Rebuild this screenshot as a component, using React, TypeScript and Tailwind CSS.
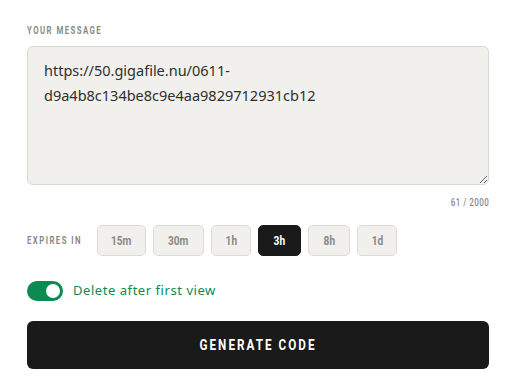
import { useState } from 'react';

const cond = "font-['Roboto',sans-serif] font-bold";

const options = [
    { v: '15m', w: 'w-[49px]' },
    { v: '30m', w: 'w-[51px]' },
    { v: '1h', w: 'w-[40px]' },
    { v: '3h', w: 'w-[43px]' },
    { v: '8h', w: 'w-[42px]' },
    { v: '1d', w: 'w-[40px]' },
];

export default function App() {
    const [expiry, setExpiry] = useState('3h');
    const [burn, setBurn] = useState(true);
    const msg = 'https://50.gigafile.nu/0611-d9a4b8c134be8c9e4aa9829712931cb12';

    return (
        <div className="min-h-screen bg-white px-[27px] pt-[25px] font-['Noto_Sans',sans-serif]">
            <label className={`${cond} block text-[10px] leading-[12px] tracking-[1.85px] text-[#8a8a86] mb-[9px] whitespace-nowrap`}>
                <span className="inline-block scale-x-[0.78] origin-left">YOUR MESSAGE</span>
            </label>
            <textarea
                defaultValue={msg}
                className="block w-full h-[139px] rounded-[6px] border border-[#d8d7d2] bg-[#f1f0ec] px-[16px] py-[11px] text-[14.5px] leading-[25px] text-[#2f2f2f] outline-none"
            />
            <div className={`${cond} font-medium text-right text-[10px] text-[#8a8a86] mt-[10px] tracking-[0.6px]`}>
                <span className="inline-block scale-x-[0.8] origin-right">61 / 2000</span>
            </div>

            <div className="flex items-center mt-[15px]">
                <span className={`${cond} text-[10px] tracking-[1.85px] text-[#8a8a86] w-[70px] whitespace-nowrap`}>
                    <span className="inline-block scale-x-[0.78] origin-left">EXPIRES IN</span>
                </span>
                <div className="flex gap-[7px]">
                    {options.map((o) => (
                        <button
                            key={o.v}
                            onClick={() => setExpiry(o.v)}
                            className={`${cond} ${o.w} h-[31px] rounded-[5px] border text-[13px] ${
                                expiry === o.v
                                    ? 'bg-[#1a1a1a] border-[#1a1a1a] text-white'
                                    : 'bg-[#f1f0ec] border-[#dcdbd6] text-[#8a8a86]'
                            }`}
                        >
                            <span className="inline-block scale-x-[0.78]">{o.v}</span>
                        </button>
                    ))}
                </div>
            </div>

            <div className="flex items-center gap-[10px] mt-[25px]">
                <button
                    onClick={() => setBurn(!burn)}
                    className={`relative w-[36px] h-[20px] rounded-full ${burn ? 'bg-[#0b8a52]' : 'bg-gray-300'}`}
                >
                    <span className={`absolute top-[3px] w-[14px] h-[14px] rounded-full bg-white ${burn ? 'left-[19px]' : 'left-[3px]'}`} />
                </button>
                <span className="text-[13px] tracking-[0.55px] text-[#0b8a52]">Delete after first view</span>
            </div>

            <button className={`${cond} mt-[20px] w-full h-[48px] rounded-[6px] bg-[#1a1a1a] text-white text-[15px] tracking-[2.6px]`}>
                <span className="inline-block scale-x-[0.78]">GENERATE CODE</span>
            </button>
        </div>
    );
}
